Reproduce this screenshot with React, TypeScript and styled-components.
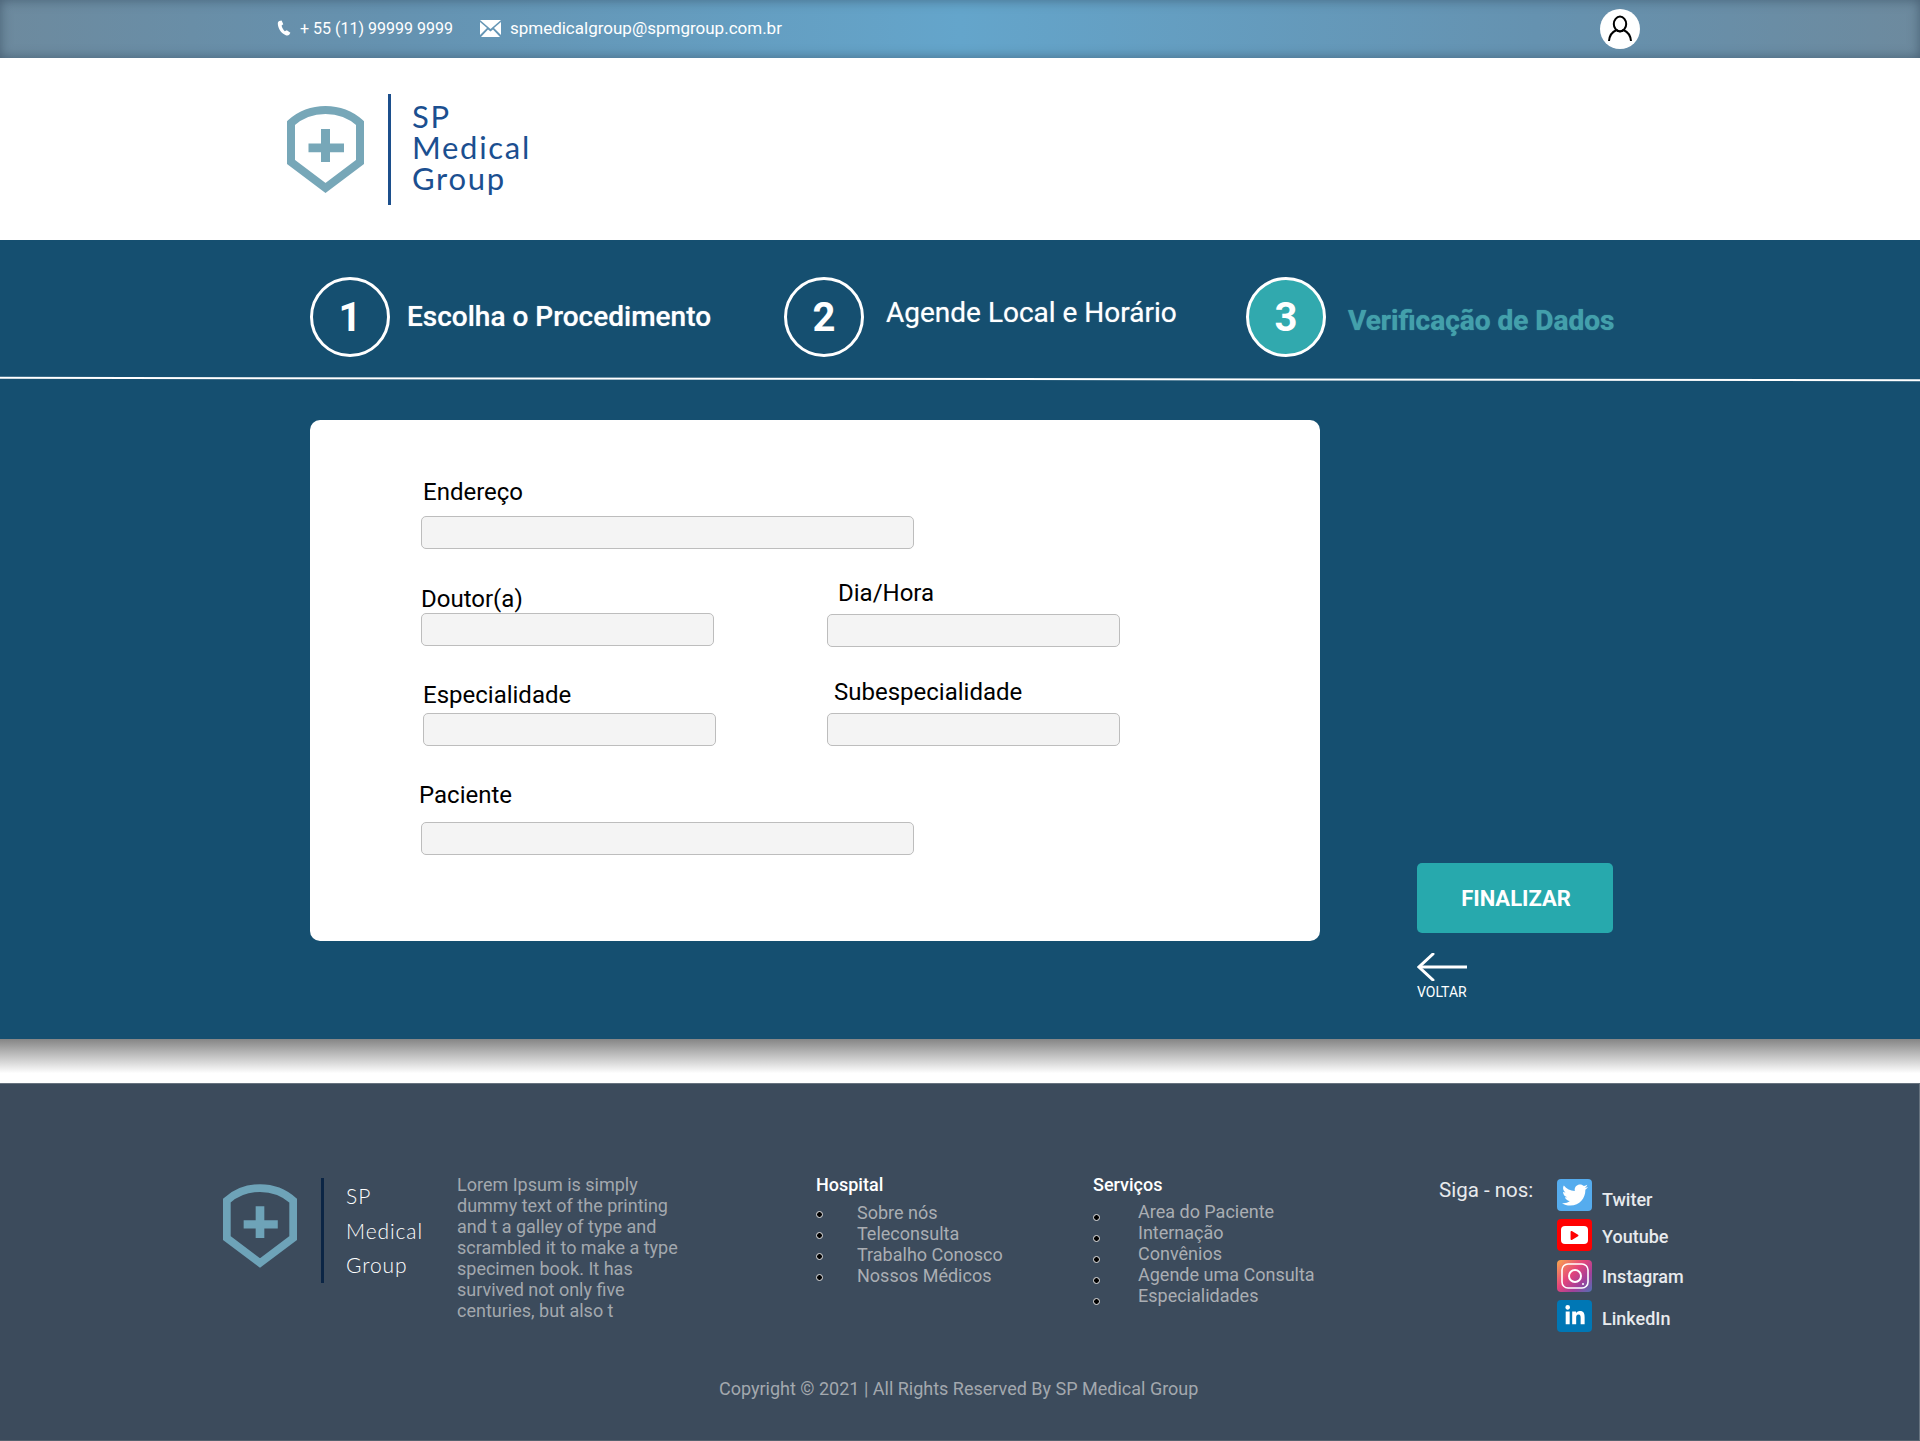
import React from "react";
import styled, { createGlobalStyle } from "styled-components";
import { FaLinkedinIn, FaPlay, FaTwitter } from "react-icons/fa";

const GlobalStyle = createGlobalStyle`
  html, body {
    margin: 0;
    padding: 0;
    background: #fff;
    font-family: Roboto, "Liberation Sans", sans-serif;
  }
  * {
    box-sizing: border-box;
  }
`;

const ShieldLogo: React.FC<{ color: string; width: number; height: number }> = ({
  color,
  width,
  height,
}) => (
  <svg width={width} height={height} viewBox="0 0 77 87">
    <path
      d="M4 17 C14 8 26 4 38.5 4 C51 4 63 8 73 17 V56 L38.5 82 L4 56 Z"
      fill="none"
      stroke={color}
      strokeWidth="8"
    />
    <path d="M34 23 H43 V37.5 H57 V46.2 H43 V56 H34 V46.2 H21.5 V37.5 H34 Z" fill={color} />
  </svg>
);

const App: React.FC = () => {
  const hospital = ["Sobre nós", "Teleconsulta", "Trabalho Conosco", "Nossos Médicos"];
  const servicos = [
    "Area do Paciente",
    "Internação",
    "Convênios",
    "Agende uma Consulta",
    "Especialidades",
  ];

  return (
    <Page>
      <GlobalStyle />
      <TopBar>
        <ContactItem>
          <svg width="15" height="16" viewBox="0 0 15 16" fill="#fff">
            <path d="M2.2 1 L4.6 0.4 L6.3 4.3 L4.6 5.6 C4.9 7.6 6.2 10 7.8 11.2 L9.8 10.2 L13.4 12.8 L12.2 14.8 C11.4 15.7 10 15.8 8.8 15.3 C4 13.4 0.9 8.4 0.8 3.6 C0.8 2.5 1.3 1.5 2.2 1 Z" />
          </svg>
          <span>+ 55 (11) 99999 9999</span>
        </ContactItem>
        <ContactItem $gap={9}>
          <svg width="21" height="17" viewBox="0 0 21 17">
            <path d="M0 0 H21 L10.5 9 Z" fill="#fff" />
            <path d="M0 2 L7 8 L0 15 Z" fill="#fff" />
            <path d="M21 2 L14 8 L21 15 Z" fill="#fff" />
            <path d="M1 17 L8 9.5 L10.5 11.5 L13 9.5 L20 17 Z" fill="#fff" />
          </svg>
          <EmailText>spmedicalgroup@spmgroup.com.br</EmailText>
        </ContactItem>
        <UserButton>
          <svg width="26" height="28" viewBox="0 0 26 28" fill="none" stroke="#000" strokeWidth="2">
            <ellipse cx="13" cy="9" rx="6.2" ry="7.4" />
            <path d="M9.5 15 C5 17 2.4 21 2 26" />
            <path d="M16.5 15 C21 17 23.6 21 24 26" />
            <path d="M9.5 15 C11.5 16.8 14.5 16.8 16.5 15" />
          </svg>
        </UserButton>
      </TopBar>

      <Header>
        <ShieldLogo color="#77a7b8" width={77} height={87} />
        <LogoBar />
        <LogoText>
          <span>SP</span>
          <span>Medical</span>
          <span>Group</span>
        </LogoText>
      </Header>

      <Main>
        <Steps>
          <Step $width={474}>
            <StepCircle>1</StepCircle>
            <StepLabel $weight={500} $left={17} $shift={-2}>
              Escolha o Procedimento
            </StepLabel>
          </Step>
          <Step $width={462}>
            <StepCircle>2</StepCircle>
            <StepLabel $weight={400} $left={22} $shift={-9}>
              Agende Local e Horário
            </StepLabel>
          </Step>
          <Step>
            <StepCircle $active>3</StepCircle>
            <StepLabel $weight={700} $left={22} $shift={6} $active>
              Verificação de Dados
            </StepLabel>
          </Step>
        </Steps>
        <Divider />

        <Content>
          <FormCard>
            <FormRow>
              <Field>
                <FieldLabel $indent={2} $gap={10}>
                  Endereço
                </FieldLabel>
                <FieldInput $wide readOnly />
              </Field>
            </FormRow>
            <FormRow $top={30}>
              <Field $offsetTop={6}>
                <FieldLabel>Doutor(a)</FieldLabel>
                <FieldInput readOnly />
              </Field>
              <Field>
                <FieldLabel $indent={11} $gap={7}>
                  Dia/Hora
                </FieldLabel>
                <FieldInput readOnly />
              </Field>
            </FormRow>
            <FormRow $top={31}>
              <Field $offsetTop={3} $offsetLeft={2}>
                <FieldLabel $gap={4}>Especialidade</FieldLabel>
                <FieldInput readOnly />
              </Field>
              <Field>
                <FieldLabel $indent={7} $gap={7}>
                  Subespecialidade
                </FieldLabel>
                <FieldInput readOnly />
              </Field>
            </FormRow>
            <FormRow $top={35}>
              <Field>
                <FieldLabel $indent={-2} $gap={13}>
                  Paciente
                </FieldLabel>
                <FieldInput $wide readOnly />
              </Field>
            </FormRow>
          </FormCard>

          <SideActions>
            <FinishButton>FINALIZAR</FinishButton>
            <BackLink>
              <svg width="50" height="28" viewBox="0 0 50 28" fill="none" stroke="#fff" strokeWidth="3">
                <path d="M50 14 H2" />
                <path d="M16 1 L2 14 L16 27" strokeLinecap="round" />
              </svg>
              <span>VOLTAR</span>
            </BackLink>
          </SideActions>
        </Content>
      </Main>

      <FadeStrip />

      <Footer>
        <FooterColumns>
          <FooterLogo>
            <ShieldLogo color="#6ea3b8" width={74} height={84} />
            <FooterLogoBar />
            <FooterLogoText>
              <span>SP</span>
              <span>Medical</span>
              <span>Group</span>
            </FooterLogoText>
          </FooterLogo>

          <FooterAbout>
            Lorem Ipsum is simply dummy text of the printing and t a galley of type and scrambled it
            to make a type specimen book. It has survived not only five centuries, but also t
          </FooterAbout>

          <LinkColumn $width={277}>
            <LinkTitle>Hospital</LinkTitle>
            <LinkList>
              {hospital.map((item) => (
                <LinkItem key={item} $indent={41}>
                  <Bullet $drop={9} />
                  {item}
                </LinkItem>
              ))}
            </LinkList>
          </LinkColumn>

          <LinkColumn $width={346}>
            <LinkTitle>Serviços</LinkTitle>
            <LinkList $top={-1}>
              {servicos.map((item) => (
                <LinkItem key={item} $indent={45}>
                  <Bullet $drop={13} />
                  {item}
                </LinkItem>
              ))}
            </LinkList>
          </LinkColumn>

          <SocialColumn>
            <SocialTitle>Siga - nos:</SocialTitle>
            <SocialList>
              <SocialRow $height={40} $shift={8}>
                <SocialIcon $bg="#55acee">
                  <FaTwitter size={26} color="#fff" />
                </SocialIcon>
                <span>Twiter</span>
              </SocialRow>
              <SocialRow $height={41} $shift={5}>
                <SocialIcon $bg="#ff0000">
                  <YoutubeFrame>
                    <FaPlay size={9} color="#ff0000" />
                  </YoutubeFrame>
                </SocialIcon>
                <span>Youtube</span>
              </SocialRow>
              <SocialRow $height={40} $shift={4}>
                <SocialIcon $bg="linear-gradient(135deg, #f9a84d 0%, #e5457a 42%, #a2409a 70%, #4f71b5 100%)">
                  <svg width="28" height="26" viewBox="0 0 28 26" fill="none" stroke="#fff" strokeWidth="1.6">
                    <rect x="1" y="1" width="26" height="24" rx="6" />
                    <circle cx="14" cy="13" r="6" strokeWidth="2" />
                    <circle cx="22" cy="21" r="1" fill="#fff" stroke="none" />
                  </svg>
                </SocialIcon>
                <span>Instagram</span>
              </SocialRow>
              <SocialRow $height={32} $shift={6}>
                <SocialIcon $bg="#0077b5">
                  <FaLinkedinIn size={22} color="#fff" />
                </SocialIcon>
                <span>LinkedIn</span>
              </SocialRow>
            </SocialList>
          </SocialColumn>
        </FooterColumns>
        <Copyright>Copyright © 2021 | All Rights Reserved By SP Medical Group</Copyright>
      </Footer>
    </Page>
  );
};

export default App;

const Page = styled.div`
  width: 1920px;
  height: 1441px;
  overflow: hidden;
`;

const TopBar = styled.div`
  height: 58px;
  padding: 0 0 2px 277px;
  display: flex;
  align-items: center;
  color: #fff;
  font-size: 16px;
  background: linear-gradient(90deg, #6d8a9e 0%, #6592b0 20%, #64a5cb 50%, #6592b0 80%, #6d8a9e 100%);
  box-shadow: inset 0 0 12px rgba(40, 60, 80, 0.55);
`;

const ContactItem = styled.div<{ $gap?: number }>`
  display: flex;
  align-items: center;
  gap: ${(p) => p.$gap ?? 8}px;
  margin-right: 27px;
`;

const EmailText = styled.span`
  font-size: 17px;
`;

const UserButton = styled.div`
  width: 40px;
  height: 40px;
  margin: 2px 0 0 791px;
  border-radius: 50%;
  background: #fff;
  display: flex;
  align-items: center;
  justify-content: center;
`;

const Header = styled.header`
  height: 182px;
  padding-left: 287px;
  display: flex;
  align-items: center;
  background: #fff;
`;

const LogoBar = styled.div`
  width: 3px;
  height: 111px;
  margin-left: 24px;
  background: #1c4f8c;
`;

const LogoText = styled.div`
  margin: -4px 0 0 21px;
  display: flex;
  flex-direction: column;
  font-family: Lato, "Liberation Sans", sans-serif;
  font-size: 31px;
  line-height: 31px;
  letter-spacing: 1.7px;
  color: #1b4f90;
`;

const Main = styled.main`
  height: 799px;
  padding-top: 37px;
  background: #154f70;
`;

const Steps = styled.div`
  padding-left: 310px;
  display: flex;
`;

const Step = styled.div<{ $width?: number }>`
  width: ${(p) => (p.$width ? `${p.$width}px` : "auto")};
  display: flex;
  align-items: center;
`;

const StepCircle = styled.div<{ $active?: boolean }>`
  width: 80px;
  height: 80px;
  flex: none;
  border: 3px solid #fff;
  border-radius: 50%;
  background: ${(p) => (p.$active ? "#31a9ae" : "transparent")};
  color: #fff;
  display: flex;
  align-items: center;
  justify-content: center;
  font-size: 40px;
  font-weight: 700;
`;

const StepLabel = styled.div<{ $weight: number; $left: number; $shift: number; $active?: boolean }>`
  margin-left: ${(p) => p.$left}px;
  margin-top: ${(p) => p.$shift}px;
  font-size: 28px;
  font-weight: ${(p) => p.$weight};
  color: ${(p) => (p.$active ? "#43a0ab" : "#fff")};
  white-space: nowrap;
  text-shadow: 0 0 1px ${(p) => (p.$active ? "#43a0ab" : "rgba(255, 255, 255, 0.6)")};
`;

const Divider = styled.div`
  height: 2px;
  margin-top: 21px;
  background: #fff;
  transform: rotate(0.07deg);
`;

const Content = styled.div`
  margin-top: 40px;
  padding-left: 310px;
  display: flex;
  align-items: flex-start;
`;

const FormCard = styled.div`
  width: 1010px;
  height: 521px;
  padding: 58px 0 0 111px;
  background: #fff;
  border-radius: 10px;
`;

const FormRow = styled.div<{ $top?: number }>`
  margin-top: ${(p) => p.$top ?? 0}px;
  display: grid;
  grid-template-columns: 406px 293px;
  align-items: start;
`;

const Field = styled.div<{ $offsetTop?: number; $offsetLeft?: number }>`
  margin-top: ${(p) => p.$offsetTop ?? 0}px;
  margin-left: ${(p) => p.$offsetLeft ?? 0}px;
`;

const FieldLabel = styled.div<{ $indent?: number; $gap?: number }>`
  height: 28px;
  margin-left: ${(p) => p.$indent ?? 0}px;
  margin-bottom: ${(p) => p.$gap ?? 0}px;
  font-size: 24px;
  line-height: 28px;
  color: #000;
  white-space: nowrap;
`;

const FieldInput = styled.input<{ $wide?: boolean }>`
  display: block;
  width: ${(p) => (p.$wide ? "493px" : "293px")};
  height: 33px;
  padding: 0 8px;
  background: #f4f4f4;
  border: 1.5px solid #bdbdbd;
  border-radius: 5px;
  outline: none;
`;

const SideActions = styled.div`
  margin-top: 443px;
  margin-left: 97px;
  display: flex;
  flex-direction: column;
`;

const FinishButton = styled.button`
  width: 196px;
  height: 70px;
  padding: 0 0 0 2px;
  border: none;
  border-radius: 5px;
  background: #27a9ad;
  color: #fff;
  font-family: Roboto, sans-serif;
  font-size: 22px;
  font-weight: 700;
`;

const BackLink = styled.div`
  width: 50px;
  margin-top: 20px;
  display: flex;
  flex-direction: column;
  color: #fff;
  font-size: 14px;
  line-height: 16px;
  span {
    margin-top: 3px;
  }
`;

const FadeStrip = styled.div`
  height: 44px;
  background: linear-gradient(180deg, #858585 0%, #c4c4c4 40%, #fff 78%, #fff 100%);
`;

const Footer = styled.footer`
  height: 358px;
  padding-top: 94px;
  background: #3c4b5c;
  border-top: 1px solid #67737f;
  border-right: 1px solid #67737f;
  border-bottom: 1px solid #55626f;
`;

const FooterColumns = styled.div`
  padding-left: 223px;
  display: flex;
  align-items: flex-start;
`;

const FooterLogo = styled.div`
  width: 234px;
  display: flex;
  align-items: flex-start;
  svg {
    margin-top: 6px;
  }
`;

const FooterLogoBar = styled.div`
  width: 3px;
  height: 105px;
  margin-left: 24px;
  background: #0b2545;
`;

const FooterLogoText = styled.div`
  margin-left: 22px;
  padding-top: 1px;
  display: flex;
  flex-direction: column;
  font-family: Lato, "Liberation Sans", sans-serif;
  font-weight: 300;
  font-size: 21px;
  line-height: 34.6px;
  letter-spacing: 0.9px;
  color: #fff;
`;

const FooterAbout = styled.p`
  width: 240px;
  margin: -4px 119px 0 0;
  font-size: 18px;
  line-height: 21px;
  color: #a3a8ae;
`;

const LinkColumn = styled.div<{ $width: number }>`
  width: ${(p) => p.$width}px;
  margin-top: -4px;
`;

const LinkTitle = styled.div`
  font-size: 18px;
  font-weight: 500;
  line-height: 21px;
  color: #fff;
`;

const LinkList = styled.ul<{ $top?: number }>`
  margin: ${(p) => 7 + (p.$top ?? 0)}px 0 0;
  padding: 0;
  list-style: none;
`;

const LinkItem = styled.li<{ $indent: number }>`
  display: flex;
  align-items: flex-start;
  height: 21px;
  font-size: 18px;
  line-height: 21px;
  color: #aaaeb3;
  gap: ${(p) => p.$indent - 7}px;
`;

const Bullet = styled.i<{ $drop: number }>`
  width: 7px;
  height: 7px;
  flex: none;
  margin-top: ${(p) => p.$drop}px;
  border: 1.5px solid #e6e6e6;
  border-radius: 50%;
  background: #000;
`;

const SocialColumn = styled.div`
  margin-top: 1px;
  display: flex;
  align-items: flex-start;
`;

const SocialTitle = styled.div`
  width: 118px;
  font-size: 20.5px;
  line-height: 23px;
  color: #e8eaed;
  white-space: nowrap;
`;

const SocialList = styled.div`
  display: flex;
  flex-direction: column;
`;

const SocialRow = styled.div<{ $height: number; $shift: number }>`
  height: ${(p) => p.$height}px;
  display: flex;
  align-items: flex-start;
  font-size: 18px;
  font-weight: 500;
  color: #e8eaed;
  span {
    margin-left: 10px;
    margin-top: ${(p) => p.$shift + 2}px;
    line-height: 21px;
  }
`;

const SocialIcon = styled.div<{ $bg: string }>`
  width: 35px;
  height: 32px;
  flex: none;
  border-radius: 4px;
  background: ${(p) => p.$bg};
  display: flex;
  align-items: center;
  justify-content: center;
`;

const YoutubeFrame = styled.div`
  width: 27px;
  height: 18px;
  border-radius: 4px;
  background: #fff;
  display: flex;
  align-items: center;
  justify-content: center;
`;

const Copyright = styled.div`
  margin-top: 46px;
  padding-left: 719px;
  font-size: 18px;
  line-height: 21px;
  color: #a3a8ae;
`;
